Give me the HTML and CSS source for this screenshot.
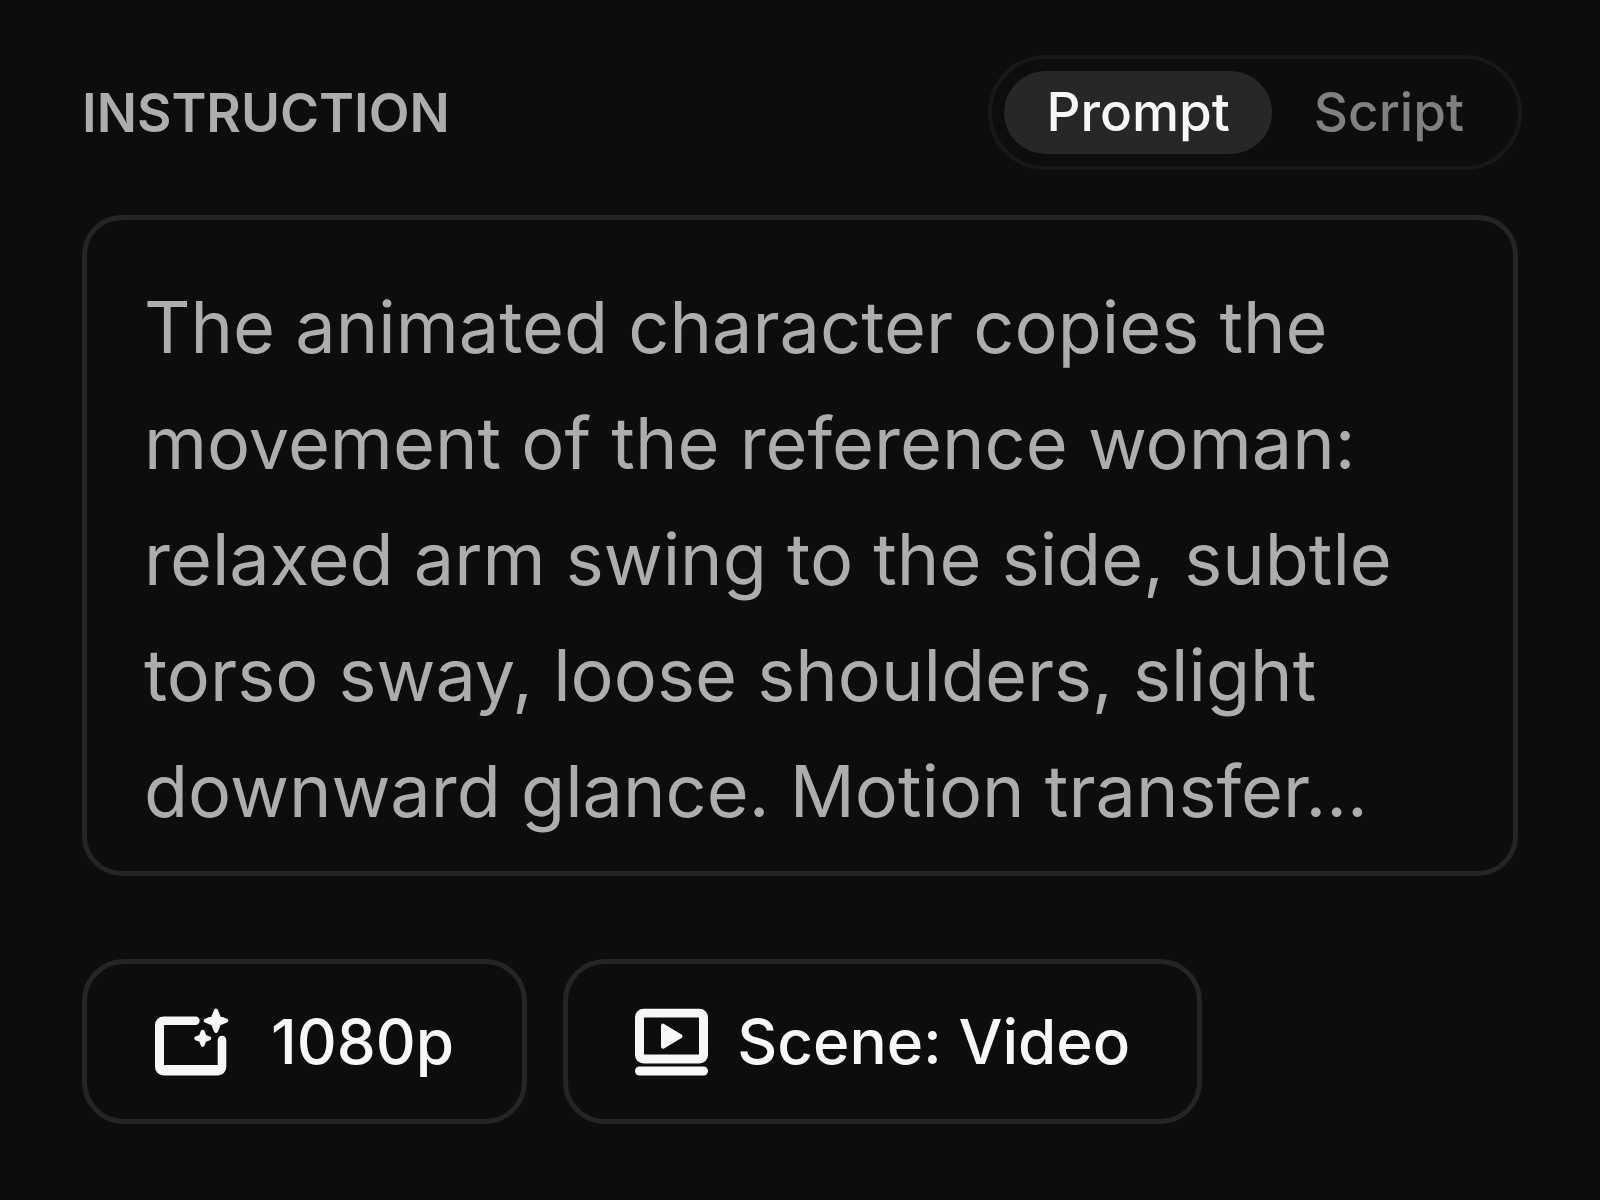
FILE: index.html
```
<!DOCTYPE html>
<html lang="en">
<head>
<meta charset="UTF-8">
<meta name="viewport" content="width=device-width, initial-scale=1.0">
<title>Instruction</title>
<link rel="stylesheet" href="styles.css">
</head>
<body>
<main class="panel">
    <div class="panel-header">
        <label class="title" for="instruction">INSTRUCTION</label>
        <div class="toggle">
            <button type="button" class="active" aria-pressed="true">Prompt</button>
            <button type="button" aria-pressed="false">Script</button>
        </div>
    </div>
    <textarea id="instruction" class="prompt" rows="5" spellcheck="false">The animated character copies the movement of the reference woman: relaxed arm swing to the side, subtle torso sway, loose shoulders, slight downward glance. Motion transfer...</textarea>
    <div class="options">
        <button type="button" class="chip resolution">
            <svg width="74" height="68" viewBox="0 0 74 68" aria-hidden="true">
                <path d="M8.500 8.500H40.500a4.200 4.200 0 0 1 0 8.400H9V57H62.700V32a4.300 4.300 0 0 1 8.600 0V59a8.500 8.500 0 0 1-8.500 8.500H8.500A8.500 8.500 0 0 1 0 59V17A8.500 8.500 0 0 1 8.500 8.500Z"/>
                <path class="star" d="M61 2.500L64 9.700L71.200 12.700L64 15.700L61 22.900L58 15.700L50.800 12.700L58 9.700Z"/>
                <path class="star" d="M47.700 23.800L49.500 28.500L54.200 30.300L49.500 32.100L47.700 36.800L45.900 32.100L41.200 30.300L45.900 28.500Z"/>
            </svg>
            1080p
        </button>
        <button type="button" class="chip">
            <svg width="73" height="68" viewBox="0 0 73 68" aria-hidden="true">
                <path fill-rule="evenodd" d="M8.500 .7H64.500a8.500 8.500 0 0 1 8.500 8.500V47a8.500 8.500 0 0 1-8.500 8.500H8.500A8.500 8.500 0 0 1 0 47V9.200A8.500 8.500 0 0 1 8.500 .7ZM9 9.500V46.500H64V9.500Z"/>
                <path class="play" d="M28 17.700V38.700L45.500 28.200Z"/>
                <rect y="58.500" width="73" height="9" rx="4.500"/>
            </svg>
            Scene: Video
        </button>
    </div>
</main>
</body>
</html>
```
FILE: styles.css
```
* {
    box-sizing: border-box;
}
body {
    margin: 0;
    min-height: 100vh;
    background-color: #0d0d0d;
    font-family: Inter, sans-serif;
}
button,
textarea {
    font-family: inherit;
}
.panel {
    padding: 55px 82px;
}
.panel-header {
    display: flex;
    justify-content: space-between;
    align-items: center;
    margin-right: -4px;
    margin-bottom: 45px;
}
.title {
    color: #adadad;
    font-size: 53px;
    font-weight: 600;
}
.toggle {
    display: flex;
    padding: 12px;
    border: 4px solid #181818;
    border-radius: 58px;
}
.toggle button {
    padding: 0 42px;
    border: none;
    border-radius: 42px;
    background: none;
    color: #808080;
    font-size: 53px;
    font-weight: 500;
    line-height: 83px;
    cursor: pointer;
}
.toggle button.active {
    background-color: #272727;
    color: #f7f7f7;
}
.prompt {
    display: block;
    box-sizing: content-box;
    width: calc(100% - 124px);
    padding: 49px 57px 22px;
    border: 5px solid #252525;
    border-radius: 40px;
    outline: none;
    background: none;
    color: #adadad;
    font-size: 72px;
    line-height: 116px;
    resize: none;
    overflow: hidden;
}
.options {
    display: flex;
    gap: 36px;
    margin-top: 83px;
}
.chip {
    display: flex;
    align-items: center;
    gap: 29px;
    padding: 0 67px;
    border: 5px solid #252525;
    border-radius: 42px;
    background: none;
    color: #f7f7f7;
    font-size: 62px;
    font-weight: 500;
    line-height: 155px;
    cursor: pointer;
}
.chip.resolution {
    gap: 42px;
    padding: 0 68px;
}
.chip svg {
    fill: currentColor;
}
.star,
.play {
    stroke: currentColor;
    stroke-width: 4;
    stroke-linejoin: round;
}
```
